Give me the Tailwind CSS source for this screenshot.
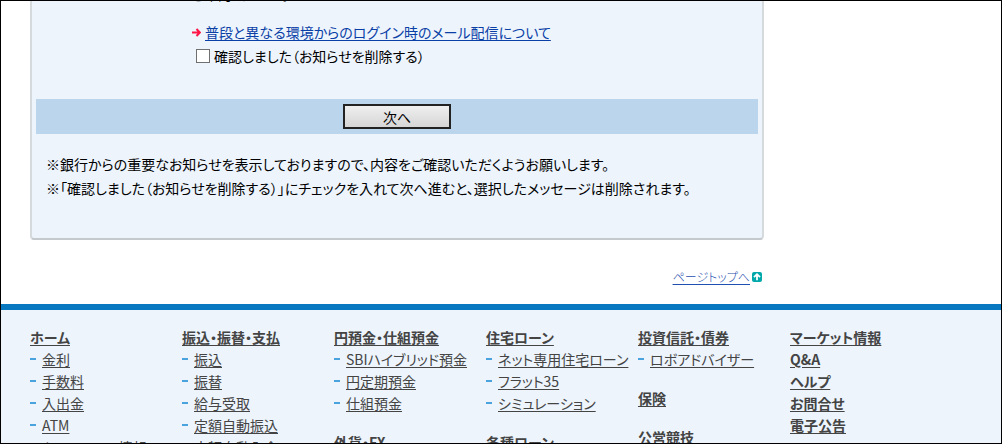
<!DOCTYPE html>
<html lang="ja">

<head>
    <meta charset="UTF-8">
    <meta name="viewport" content="width=device-width, initial-scale=1.0">
    <title>お知らせ</title>
    <script src="https://cdn.jsdelivr.net/npm/@tailwindcss/browser@4"></script>
</head>

<body class="bg-white font-['Noto_Sans_CJK_JP',sans-serif] text-sm text-black [font-feature-settings:'palt']">
    <div class="flex h-screen flex-col overflow-hidden border border-black">
        <!-- Notice -->
        <main class="ml-[29px] w-full max-w-[734px] shrink-0">
            <form class="rounded-b border-x-2 border-b-2 border-x-[#d5dadd] border-b-[#c3c9cd] bg-[#edf4fc] pb-[38px] leading-6">
                <div class="-mt-[19px] pl-40">
                    <p>ご確認ください。</p>
                    <p class="mt-3.5 flex items-center gap-1">
                        <svg class="size-[9px]" viewBox="0 0 9 9" fill="none" stroke="#ff1446" stroke-width="2">
                            <path d="M0 4.5h7.5M4.5 1l3.3 3.5L4.5 8" />
                        </svg>
                        <a href="#" class="text-[#0a3fa6] underline underline-offset-2">普段と異なる環境からのログイン時のメール配信について</a>
                    </p>
                    <div class="flex items-center gap-1 pl-1">
                        <input type="checkbox" id="confirm" name="confirm" class="size-3.5 appearance-none border border-[#707070] bg-white checked:bg-[#0a3fa6]">
                        <label for="confirm">確認しました（お知らせを削除する）</label>
                    </div>
                </div>

                <div class="mx-1 mt-[31px] flex h-[35px] items-center justify-center bg-[#bad5ec]">
                    <button type="submit" class="h-[25px] w-[108px] border-2 border-[#222] bg-linear-to-b from-[#efefef] to-[#d6d6d6] leading-5">次へ</button>
                </div>

                <div class="mt-[18px] pl-3.5">
                    <p>※銀行からの重要なお知らせを表示しておりますので、内容をご確認いただくようお願いします。</p>
                    <p>※「確認しました（お知らせを削除する）」にチェックを入れて次へ進むと、選択したメッセージは削除されます。</p>
                </div>
            </form>

            <div class="mt-[27px] mb-[17px] flex items-center justify-end gap-0.5 pr-0.5 text-xs leading-5">
                <a href="#" class="font-light text-[#1f4fb0] underline underline-offset-2">ページトップへ</a>
                <svg class="size-2.5" viewBox="0 0 10 10">
                    <rect width="10" height="10" rx="2" fill="#00a8ac" />
                    <path d="M2 5.2L5 2.2l3 3M5 2.8v5.4" fill="none" stroke="#fff" stroke-width="1.8" />
                </svg>
            </div>
        </main>

        <!-- Footer navigation -->
        <footer class="min-h-0 flex-1 overflow-hidden border-t-6 border-[#0878c0] bg-[#edf4fc] pt-4 pl-[29px] text-[#444] leading-[22px]">
            <nav class="flex whitespace-nowrap [&_a]:underline [&_a]:underline-offset-2 [&_h2]:font-bold [&_li]:flex [&_li]:items-center [&_li]:gap-1.5 [&_li]:before:h-0.5 [&_li]:before:w-1.5 [&_li]:before:bg-[#4aa3dc]">
                <div class="w-[152px]">
                    <h2><a href="#">ホーム</a></h2>
                    <ul>
                        <li><a href="#">金利</a></li>
                        <li><a href="#">手数料</a></li>
                        <li><a href="#">入出金</a></li>
                        <li><a href="#">ATM</a></li>
                        <li><a href="#">キャンペーン情報</a></li>
                    </ul>
                </div>
                <div class="w-[152px]">
                    <h2><a href="#">振込・振替・支払</a></h2>
                    <ul>
                        <li><a href="#">振込</a></li>
                        <li><a href="#">振替</a></li>
                        <li><a href="#">給与受取</a></li>
                        <li><a href="#">定額自動振込</a></li>
                        <li><a href="#">定額自動入金</a></li>
                    </ul>
                </div>
                <div class="w-[152px]">
                    <h2><a href="#">円預金・仕組預金</a></h2>
                    <ul>
                        <li><a href="#">SBIハイブリッド預金</a></li>
                        <li><a href="#">円定期預金</a></li>
                        <li><a href="#">仕組預金</a></li>
                    </ul>
                    <h2 class="mt-[17px]"><a href="#">外貨・FX</a></h2>
                </div>
                <div class="w-[152px]">
                    <h2><a href="#">住宅ローン</a></h2>
                    <ul>
                        <li><a href="#">ネット専用住宅ローン</a></li>
                        <li><a href="#">フラット35</a></li>
                        <li><a href="#">シミュレーション</a></li>
                    </ul>
                    <h2 class="mt-[17px]"><a href="#">各種ローン</a></h2>
                </div>
                <div class="w-[152px]">
                    <h2><a href="#">投資信託・債券</a></h2>
                    <ul>
                        <li><a href="#">ロボアドバイザー</a></li>
                    </ul>
                    <h2 class="mt-[17px]"><a href="#">保険</a></h2>
                    <h2 class="mt-[17px]"><a href="#">公営競技</a></h2>
                </div>
                <div>
                    <h2><a href="#">マーケット情報</a></h2>
                    <h2><a href="#">Q&amp;A</a></h2>
                    <h2><a href="#">ヘルプ</a></h2>
                    <h2><a href="#">お問合せ</a></h2>
                    <h2><a href="#">電子公告</a></h2>
                </div>
            </nav>
        </footer>
    </div>
</body>

</html>
